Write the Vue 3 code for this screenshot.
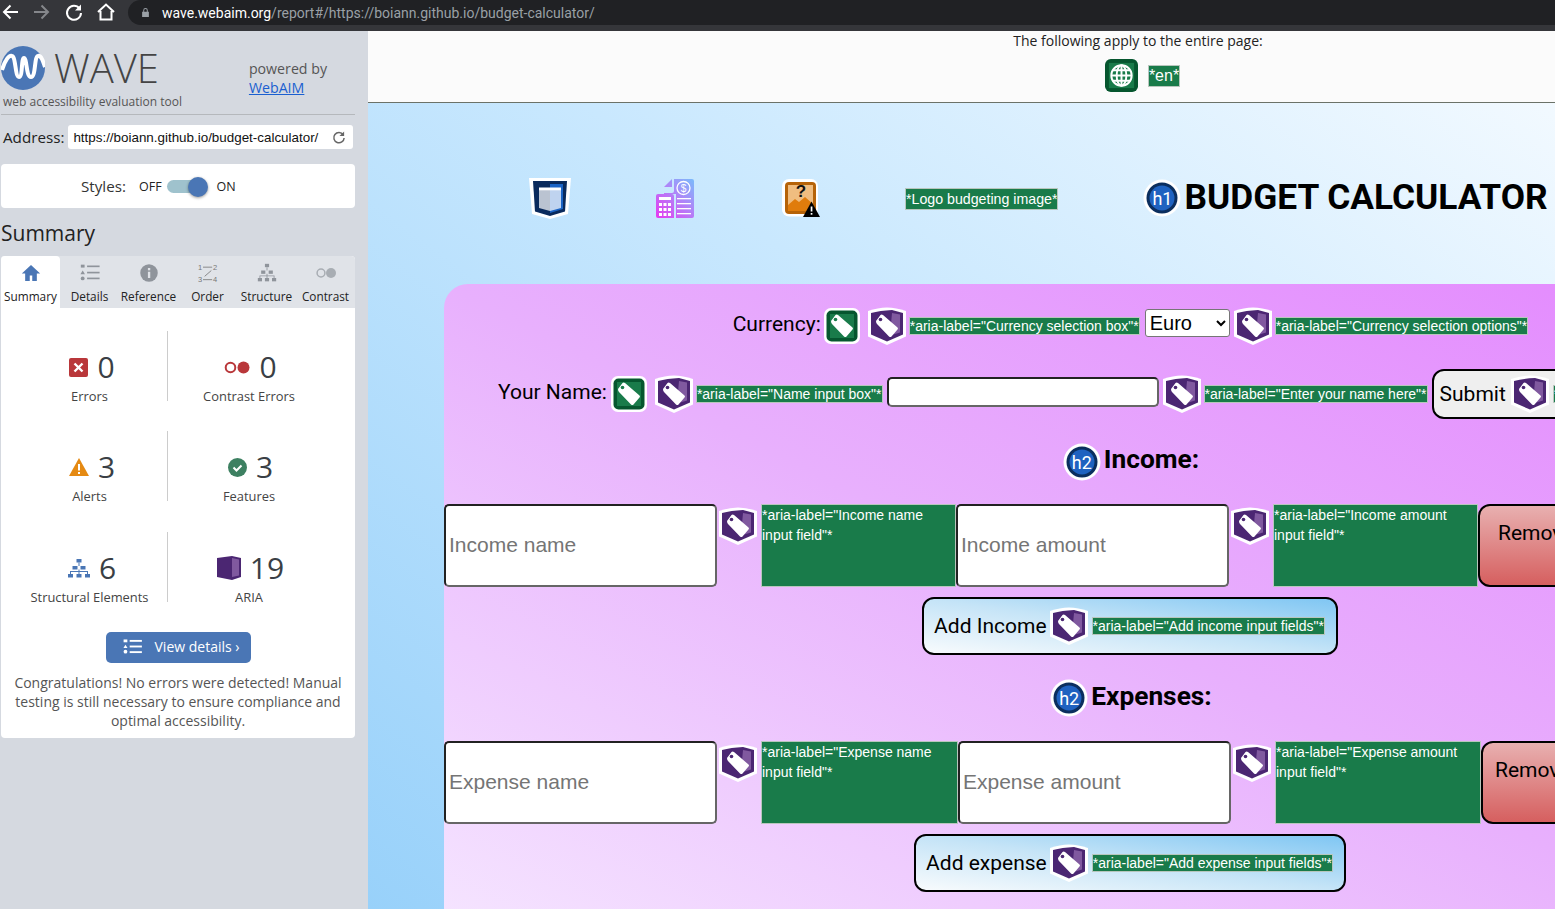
<template>
  <svg class="defs" aria-hidden="true">
    <symbol id="aria" viewBox="0 0 38 38">
      <path d="M0 4 Q10 .5 19 .5 Q28 .5 38 4 V29.500 L19 38 L0 29.500z" fill="#fff"/>
      <path d="M3 6 Q12 3.500 24 3 L35 6 V27.500 L19 34.500 L3 27.500z" fill="#4b2672"/>
      <path d="M24 6 L32 7.500 V25.500 L22 28.500z" fill="#80599f"/>
      <path d="M8 14 L12.500 8 Q13.500 7 15 8 L29.500 20.500 Q30.500 21.500 29.500 22.500 L23.500 29.500 Q22.500 30.500 21 29.500 L9 17 Q8 16 8 14z" fill="#fff"/>
      <circle cx="12.500" cy="12.500" r="1.800" fill="#4b2672"/>
    </symbol>
    <symbol id="feature-tag" viewBox="0 0 38 38">
      <rect x="1" y="1" width="36" height="36" rx="7" fill="#fff"/>
      <rect x="3.500" y="3.500" width="31" height="31" rx="5" fill="#06562f"/>
      <rect x="7" y="7" width="24" height="24" fill="#197b4a"/>
      <path d="M8 14 L12.500 8 Q13.500 7 15 8 L29.500 20.500 Q30.500 21.500 29.500 22.500 L23.500 29.500 Q22.500 30.500 21 29.500 L9 17 Q8 16 8 14z" fill="#fff"/>
      <circle cx="12.500" cy="12.500" r="1.800" fill="#197b4a"/>
    </symbol>
    <symbol id="heading" viewBox="0 0 38 38">
      <circle cx="19" cy="19" r="18.500" fill="#fff"/>
      <circle cx="19" cy="19" r="15.500" fill="#0b2e5e"/>
      <circle cx="19" cy="19" r="12.500" fill="#1f62c0"/>
    </symbol>
  </svg>

  <div class="browser-bar">
    <svg class="nav-icon" viewBox="0 0 20 20"><path d="M18 10H5M10.500 3.500 4 10l6.500 6.500" fill="none" stroke="#fff" stroke-width="2"/></svg>
    <svg class="nav-icon" viewBox="0 0 20 20"><path d="M2 10h13M9.500 3.500 16 10l-6.500 6.500" fill="none" stroke="#85878b" stroke-width="2"/></svg>
    <svg class="nav-icon" viewBox="0 0 20 20"><path d="M15.500 6.500A7 7 0 1 0 17 11" fill="none" stroke="#fff" stroke-width="2"/><path d="M17 2.500v6h-6z" fill="#fff"/></svg>
    <svg class="nav-icon" viewBox="0 0 20 20"><path d="M2 10l8-7.500 8 7.500M4.500 9v8.500h11V9" fill="none" stroke="#fff" stroke-width="2"/></svg>
    <div class="url-pill">
      <svg class="lock" viewBox="0 0 12 14"><path d="M3 6V4a3 3 0 0 1 6 0v2h1.500v7h-9V6zm1.300 0h3.400V4a1.700 1.700 0 0 0-3.400 0z" fill="#9aa0a6"/></svg>
      <span class="url-host">wave.webaim.org</span><span class="url-rest">/report#/https://boiann.github.io/budget-calculator/</span>
    </div>
  </div>

  <div class="page">
    <aside class="sidebar">
      <header class="brand">
        <div class="brand-left">
          <div class="logo-row">
            <svg class="logo" viewBox="0 0 44 44">
              <circle cx="22" cy="22" r="22" fill="#4a76b5"/>
              <path d="M1 24C4 14 8 9 11 10C15 11 14 31 18 31C22 31 20 12 23 12C26 12 25 31 30 31C35 31 33 11 37 10C40 9 42 15 44 21" fill="none" stroke="#fff" stroke-width="4"/>
            </svg>
            <span class="wave">WAVE</span>
          </div>
          <div class="tagline">web accessibility evaluation tool</div>
        </div>
        <div class="powered">powered by<br /><a href="#">WebAIM</a></div>
      </header>

      <div class="address">
        <label>Address:</label>
        <div class="address-box">
          <span>https://boiann.github.io/budget-calculator/</span>
          <svg viewBox="0 0 16 16"><path d="M13 5a5.500 5.500 0 1 0 1 3.500" fill="none" stroke="#666" stroke-width="1.600"/><path d="M14 1.500v5h-5z" fill="#666"/></svg>
        </div>
      </div>

      <div class="styles-card">
        <span class="styles-label">Styles:</span>
        <span class="toggle-text">OFF</span>
        <span class="toggle"><i></i></span>
        <span class="toggle-text">ON</span>
      </div>

      <h2 class="summary-title">Summary</h2>

      <div class="panel">
        <nav class="tabs">
          <div v-for="tab in tabs" :key="tab.name" class="tab" :class="{ active: tab.active }">
            <svg viewBox="0 0 24 24" v-html="tab.icon"></svg>
            <span>{{ tab.name }}</span>
          </div>
        </nav>

        <div class="stats">
          <div v-for="stat in stats" :key="stat.label" class="stat">
            <div class="stat-top">
              <svg :style="{ width: stat.w + 'px' }" :viewBox="stat.box" v-html="stat.icon"></svg>
              <span class="stat-num">{{ stat.count }}</span>
            </div>
            <div class="stat-label">{{ stat.label }}</div>
          </div>
        </div>

        <button class="view-details">
          <svg viewBox="0 0 20 16"><g fill="#fff"><rect x="0.500" y="0.500" width="4" height="3"/><path d="M2.500 6l2.200 3.500H.3z"/><circle cx="2.500" cy="13.500" r="2"/><rect x="7" y="1" width="13" height="2"/><rect x="7" y="7" width="13" height="2"/><rect x="7" y="13" width="13" height="2"/></g></svg>
          View details ›
        </button>
        <p class="congrats">
          Congratulations! No errors were detected! Manual testing is still necessary to ensure compliance and optimal accessibility.
        </p>
      </div>
    </aside>

    <main class="report">
      <div class="page-notes">
        <div>The following apply to the entire page:</div>
        <div class="page-notes-row">
          <svg class="globe" viewBox="0 0 34 34">
            <rect width="34" height="34" rx="6" fill="#06562f"/>
            <rect x="4" y="4" width="26" height="26" fill="#197b4a"/>
            <g fill="none" stroke="#fff" stroke-width="2"><circle cx="17" cy="17" r="10.500"/><ellipse cx="17" cy="17" rx="5" ry="10.500"/><path d="M17 6.500v21M6.500 17h21M8 11.500h18M8 22.500h18"/></g>
          </svg>
          <span class="note en-note">*en*</span>
        </div>
      </div>

      <div class="site">
        <div class="site-head">
          <svg class="ic-structure" viewBox="0 0 42 41">
            <path d="M0 0H42L39 36 21 41 3 36z" fill="#fff"/>
            <path d="M4 3H38L36 33.500 21 38 6 33.500z" fill="#0a2a5c"/>
            <path d="M21 6H34V31L21 35z" fill="#1b63c4"/>
            <path d="M10 12H32V30L21 33 10 30z" fill="#fff" fill-opacity=".72"/>
            <rect x="10" y="9.500" width="22" height="2.800" fill="#fff"/>
          </svg>
          <svg class="ic-logo" viewBox="0 0 38 40">
            <defs><linearGradient id="logo-grad" gradientUnits="userSpaceOnUse" x1="0" y1="40" x2="38" y2="0"><stop offset="0" stop-color="#e63af0"/><stop offset=".55" stop-color="#b084f8"/><stop offset="1" stop-color="#78bdfb"/></linearGradient></defs>
            <path d="M8 16V9l8-8v8H8zM18 1h18a2 2 0 0 1 2 2v35a2 2 0 0 1-2 2H20V16H8v-1h8a2 2 0 0 0 2-2z" fill="url(#logo-grad)"/>
            <path d="M0 18a2 2 0 0 1 2-2h14a2 2 0 0 1 2 2v22H2a2 2 0 0 1-2-2z" fill="url(#logo-grad)"/>
            <g fill="#fff"><rect x="3" y="19" width="12" height="3"/><rect x="3" y="25" width="3" height="3"/><rect x="7.500" y="25" width="3" height="3"/><rect x="12" y="25" width="3" height="3"/><rect x="3" y="30" width="3" height="3"/><rect x="7.500" y="30" width="3" height="3"/><rect x="12" y="30" width="3" height="3"/><rect x="3" y="35" width="3" height="3"/><rect x="7.500" y="35" width="3" height="3"/><rect x="12" y="35" width="3" height="3"/><rect x="21" y="20" width="14" height="1.300"/><rect x="21" y="25" width="14" height="1.300"/><rect x="21" y="30" width="14" height="1.300"/><rect x="21" y="35" width="14" height="1.300"/></g>
            <circle cx="27.500" cy="10" r="6.500" fill="none" stroke="#fff" stroke-width="1.300"/>
            <text x="27.500" y="13.500" font-size="10" text-anchor="middle" fill="#fff" font-family="Liberation Sans">$</text>
          </svg>
          <svg class="ic-alt" viewBox="0 0 38 38">
            <rect x="0" y="0" width="36" height="37.500" rx="7" fill="#fff"/>
            <rect x="3" y="3" width="31" height="32" rx="4" fill="#b66308"/>
            <rect x="6" y="6" width="25" height="26" fill="#f0bd80"/>
            <path d="M6 26l7-6 4 3 6-5 8 7v7H6z" fill="#e07c0c"/>
            <text x="19" y="18" font-size="17" font-weight="700" text-anchor="middle" fill="#111" font-family="Liberation Sans">?</text>
            <path d="M29.500 22.500 38 38H21z" fill="#000"/>
            <rect x="28.700" y="27.500" width="1.700" height="5" fill="#fff"/><rect x="28.700" y="34" width="1.700" height="1.700" fill="#fff"/>
          </svg>
          <span class="note logo-note">*Logo budgeting image*</span>
          <div class="h1-wrap">
            <span class="badge"><svg><use href="#heading" /></svg><b>h1</b></span>
            <h1>BUDGET CALCULATOR</h1>
          </div>
        </div>

        <section class="card">
          <div class="line currency-line">
            <label>Currency:</label>
            <svg class="ico feat"><use href="#feature-tag" /></svg>
            <svg class="ico"><use href="#aria" /></svg>
            <span class="note">*aria-label="Currency selection box"*</span>
            <select class="currency"><option>Euro</option></select>
            <svg class="ico"><use href="#aria" /></svg>
            <span class="note">*aria-label="Currency selection options"*</span>
          </div>

          <div class="line name-line">
            <label>Your Name:</label>
            <svg class="ico feat"><use href="#feature-tag" /></svg>
            <svg class="ico"><use href="#aria" /></svg>
            <span class="note">*aria-label="Name input box"*</span>
            <input class="name-input" type="text" />
            <svg class="ico"><use href="#aria" /></svg>
            <span class="note">*aria-label="Enter your name here"*</span>
            <button class="submit">Submit<svg class="ico"><use href="#aria" /></svg><span class="note">*aria-label="Submit your name"*</span></button>
          </div>

          <div class="section-title income-title">
            <span class="badge"><svg><use href="#heading" /></svg><b>h2</b></span>
            <h2>Income:</h2>
          </div>

          <div class="entry-row income-row">
            <input class="entry" type="text" placeholder="Income name" />
            <svg class="ico"><use href="#aria" /></svg>
            <span class="block-note w-a">*aria-label="Income name input field"*</span>
            <input class="entry" type="text" placeholder="Income amount" />
            <svg class="ico"><use href="#aria" /></svg>
            <span class="block-note w-b">*aria-label="Income amount input field"*</span>
            <button class="remove remove-income">Remove</button>
          </div>

          <div class="add-line">
            <button class="add">Add Income<svg class="ico"><use href="#aria" /></svg><span class="note">*aria-label="Add income input fields"*</span></button>
          </div>

          <div class="section-title expense-title">
            <span class="badge"><svg><use href="#heading" /></svg><b>h2</b></span>
            <h2>Expenses:</h2>
          </div>

          <div class="entry-row expense-row">
            <input class="entry" type="text" placeholder="Expense name" />
            <svg class="ico"><use href="#aria" /></svg>
            <span class="block-note w-c">*aria-label="Expense name input field"*</span>
            <input class="entry" type="text" placeholder="Expense amount" />
            <svg class="ico"><use href="#aria" /></svg>
            <span class="block-note w-d">*aria-label="Expense amount input field"*</span>
            <button class="remove">Remove</button>
          </div>

          <div class="add-line">
            <button class="add">Add expense<svg class="ico"><use href="#aria" /></svg><span class="note">*aria-label="Add expense input fields"*</span></button>
          </div>
        </section>
      </div>
    </main>
  </div>
</template>

<script setup>
const gray = "#8f949b";
const tabs = [
  {
    name: "Summary",
    active: true,
    icon: '<path d="M12 2.500 1 12.500H5V21.500h5.500v-6.500h3v6.500H19v-9h4z" fill="#4a76b5"/>',
  },
  {
    name: "Details",
    icon: `<g fill="${gray}"><rect x="1" y="2" width="4.500" height="3.500"/><path d="M3.200 9l2.800 4.500H.5z"/><circle cx="3.200" cy="18.500" r="2.300"/><rect x="8.500" y="3" width="15" height="2"/><rect x="8.500" y="10.500" width="15" height="2"/><rect x="8.500" y="17.500" width="15" height="2"/></g>`,
  },
  {
    name: "Reference",
    icon: `<circle cx="12" cy="12" r="10.500" fill="${gray}"/><rect x="10.700" y="10.500" width="2.800" height="7.500" fill="#e0e3e8"/><rect x="10.700" y="6" width="2.800" height="2.800" fill="#e0e3e8"/>`,
  },
  {
    name: "Order",
    icon: `<g fill="#777" font-size="9" font-family="Liberation Sans"><text x="0" y="8">1</text><text x="18" y="8">2</text><text x="0" y="23">3</text><text x="18" y="23">4</text></g><path d="M6 5h11M6 20h11M16 9l-8 7" stroke="#777" fill="none"/>`,
  },
  {
    name: "Structure",
    icon: `<g fill="${gray}"><rect x="9.500" y="1" width="5" height="4"/><rect x="5" y="9" width="5" height="4"/><rect x="14" y="9" width="5" height="4"/><rect x="1" y="18" width="5" height="4"/><rect x="9.500" y="18" width="5" height="4"/><rect x="18" y="18" width="5" height="4"/><path d="M11.500 5h1v4h-1zM3 15h18v3h-1v-2H4v2H3zM11.500 13h1v5h-1z"/></g>`,
  },
  {
    name: "Contrast",
    icon: `<circle cx="6" cy="12" r="4.700" fill="none" stroke="#a8adb3" stroke-width="1.800"/><circle cx="18" cy="12" r="6" fill="#a8adb3"/>`,
  },
];

const stats = [
  {
    label: "Errors",
    count: 0,
    w: 19,
    box: "0 0 19 19",
    icon: '<rect width="19" height="19" rx="2" fill="#b9373a"/><path d="M5.500 5.500l8 8M13.500 5.500l-8 8" stroke="#fff" stroke-width="2.400"/>',
  },
  {
    label: "Contrast Errors",
    count: 0,
    w: 26,
    box: "0 0 26 13",
    icon: '<circle cx="6.500" cy="6.500" r="4.800" fill="none" stroke="#b9373a" stroke-width="2"/><circle cx="19.500" cy="6.500" r="6" fill="#b9373a"/>',
  },
  {
    label: "Alerts",
    count: 3,
    w: 20,
    box: "0 0 20 18",
    icon: '<path d="M10 0l10 18H0z" fill="#e58a13"/><rect x="9" y="6" width="2" height="6.500" fill="#fff"/><rect x="9" y="14" width="2" height="2" fill="#fff"/>',
  },
  {
    label: "Features",
    count: 3,
    w: 19,
    box: "0 0 19 19",
    icon: '<circle cx="9.500" cy="9.500" r="9.500" fill="#3d8061"/><path d="M5.500 9.500l3 3 5-5" fill="none" stroke="#fff" stroke-width="2"/>',
  },
  {
    label: "Structural Elements",
    count: 6,
    w: 22,
    box: "0 0 22 19",
    icon: '<g fill="#4a76b5"><rect x="8.500" y="0" width="5" height="3.500"/><rect x="4.500" y="7" width="5" height="3.500"/><rect x="12.500" y="7" width="5" height="3.500"/><rect x="0" y="15" width="5" height="3.500"/><rect x="8.500" y="15" width="5" height="3.500"/><rect x="17" y="15" width="5" height="3.500"/><path d="M10.500 3.500h1V7h-1zM2 12h18v3h-1v-2H3v2H2zM10.500 10.500h1V15h-1z"/></g>',
  },
  {
    label: "ARIA",
    count: 19,
    w: 24,
    box: "0 0 24 24",
    icon: '<path d="M0 2 15 0l9 2v19l-9 3-15-3z" fill="#4b2672"/><path d="M15 2l7 1.500v16L15 21z" fill="#80599f"/>',
  },
];
</script>

<style>
html,
body {
  margin: 0;
  height: 100%;
  overflow: hidden;
}
</style>

<style scoped>
.defs {
  position: absolute;
  width: 0;
  height: 0;
}

.browser-bar {
  height: 31px;
  box-sizing: border-box;
  background: #35363a;
  display: flex;
  align-items: flex-start;
  font-family: "Roboto", sans-serif;
}

.nav-icon {
  width: 20px;
  height: 20px;
  margin-top: 2px;
  padding-right: 12px;
  flex: none;
}

.url-pill {
  flex: 1;
  height: 25px;
  background: #202124;
  border-radius: 13px 0 0 13px;
  display: flex;
  align-items: center;
  padding-left: 13px;
  font-size: 14px;
}

.lock {
  width: 9px;
  height: 11px;
  margin-right: 12px;
}

.url-host {
  color: #fff;
}

.url-rest {
  color: #9aa0a6;
}

.page {
  display: flex;
  height: 878px;
  overflow: hidden;
}

.sidebar {
  width: 368px;
  flex: none;
  box-sizing: border-box;
  background: #d5d9e0;
  padding: 15px 13px 0 1px;
  font-family: "Open Sans", sans-serif;
  color: #333;
}

.brand {
  display: flex;
  justify-content: space-between;
  border-bottom: 1px solid #b5b8bc;
  height: 68px;
}

.logo-row {
  display: flex;
  align-items: center;
  height: 44px;
}

.logo {
  width: 44px;
  height: 44px;
}

.wave {
  font-size: 40px;
  font-weight: 300;
  color: #444;
  margin-left: 9px;
  line-height: 44px;
}

.tagline {
  font-size: 12px;
  color: #555;
  margin: 4px 0 0 2px;
  line-height: 16px;
}

.powered {
  font-size: 14.200px;
  line-height: 19px;
  color: #555;
  margin: 13px 28px 0 0;
}

.powered a {
  color: #1a5fd0;
}

.address {
  display: flex;
  align-items: center;
  margin-top: 10px;
  padding-left: 2px;
}

.address label {
  font-size: 15.200px;
  color: #222;
  margin-right: 4px;
}

.address-box {
  width: 285px;
  height: 24px;
  box-sizing: border-box;
  background: #fff;
  border-radius: 3px;
  display: flex;
  align-items: center;
  justify-content: space-between;
  padding: 0 7px 0 5px;
  font-family: "Liberation Sans", sans-serif;
  font-size: 13.400px;
  color: #111;
}

.address-box svg {
  width: 15px;
  height: 15px;
}

.styles-card {
  height: 44px;
  margin-top: 15px;
  background: #fff;
  border-radius: 4px;
  display: flex;
  align-items: center;
  padding-left: 80px;
}

.styles-label {
  font-size: 15.200px;
  margin-right: 13px;
}

.toggle-text {
  font-size: 12.500px;
  color: #222;
}

.toggle {
  position: relative;
  width: 34px;
  height: 13px;
  margin: 0 16px 0 5px;
  background: #9fc2cd;
  border-radius: 7px;
}

.toggle i {
  position: absolute;
  right: -7px;
  top: -3px;
  width: 20px;
  height: 20px;
  border-radius: 50%;
  background: #4a76b5;
  box-shadow: 0 1px 3px rgba(0, 0, 0, 0.4);
}

.summary-title {
  margin: 10px 0 0;
  font-size: 21px;
  font-weight: 400;
  line-height: 30px;
  color: #222;
}

.panel {
  margin-top: 8px;
  height: 482px;
  background: #fff;
  border-radius: 4px;
  text-align: center;
}

.tabs {
  display: flex;
  height: 52px;
  background: #e0e3e8;
  border-radius: 4px 4px 0 0;
}

.tab {
  width: 59px;
  display: flex;
  flex-direction: column;
  align-items: center;
  font-size: 11.800px;
  color: #222;
  white-space: nowrap;
  padding-top: 7px;
  box-sizing: border-box;
}

.tab.active {
  background: #fff;
  border-radius: 4px 4px 0 0;
}

.tab svg {
  width: 20px;
  height: 20px;
  margin-bottom: 5px;
}

.stats {
  display: grid;
  grid-template-columns: 167px 1fr;
  grid-template-rows: 70px 71px 70px;
  row-gap: 30px;
  align-items: start;
  margin-top: 23px;
  margin-bottom: 30px;
}

.stat {
  display: flex;
  flex-direction: column;
  align-items: center;
  height: 70px;
  padding-top: 22px;
  box-sizing: border-box;
}

.stat:nth-child(odd) {
  border-right: 1px solid #ccc;
  padding-left: 11px;
}

.stat:nth-child(even) {
  padding-right: 25px;
}

.stat:nth-child(odd) .stat-top {
  margin-left: 5px;
}

.stat:nth-child(even) .stat-top {
  margin-left: 3px;
}

.stat-top {
  display: flex;
  align-items: center;
  gap: 9px;
  height: 28px;
}

.stat-num {
  font-size: 30px;
  line-height: 28px;
  color: #3a3f45;
}

.stat-label {
  margin-top: 7px;
  font-size: 12.900px;
  line-height: 17px;
  color: #444;
}

.view-details {
  width: 145px;
  height: 31px;
  box-sizing: border-box;
  background: #4a76b5;
  border: 0;
  border-radius: 5px;
  color: #fff;
  font-family: "Open Sans", sans-serif;
  font-size: 14px;
  display: inline-flex;
  align-items: center;
  padding: 0 0 2px 17px;
  gap: 13px;
  white-space: nowrap;
}

.view-details svg {
  width: 19px;
  height: 15px;
}

.congrats {
  margin: 10px 6px 0;
  font-size: 14px;
  line-height: 19px;
  color: #555;
}

.report {
  flex: 1;
  min-width: 0;
  overflow: hidden;
  background: linear-gradient(to top right, #98d1fa 0%, #c9e8fe 55%, #f6fbff 100%);
}

.page-notes {
  height: 72px;
  box-sizing: border-box;
  background: #fbfbfb;
  border-bottom: 1px solid #6b7268;
  text-align: center;
  font-family: "Open Sans", sans-serif;
  font-size: 14px;
  color: #222;
  padding-left: 353px;
}

.page-notes-row {
  display: flex;
  justify-content: center;
  align-items: center;
  gap: 11px;
  margin-top: 9px;
  padding-left: 8px;
}

.globe {
  width: 33px;
  height: 33px;
}

.note {
  background: #197b4a;
  color: #fff;
  font-family: "Liberation Sans", sans-serif;
  font-size: 14px;
  line-height: 16px;
  outline: 1px solid #b8c6bd;
  white-space: nowrap;
  flex: none;
}

.en-note {
  font-size: 16px;
  line-height: 20px;
}

.site {
  width: 1448px;
  padding-top: 75px;
  font-family: "Roboto", sans-serif;
}

.site-head {
  display: flex;
  align-items: center;
  height: 40px;
  padding-left: 161px;
  margin-bottom: 66px;
}

.ic-structure {
  width: 42px;
  height: 41px;
}

.ic-logo {
  width: 38px;
  height: 40px;
  margin-left: 85px;
}

.ic-alt {
  width: 38px;
  height: 38px;
  margin-left: 88px;
}

.logo-note {
  margin: 2px 0 0 86px;
  padding: 2px 0;
  font-size: 14.200px;
}

.h1-wrap {
  display: flex;
  align-items: center;
  margin-left: 86px;
  gap: 3px;
}

.badge {
  position: relative;
  width: 38px;
  height: 38px;
  flex: none;
}

.badge svg {
  width: 38px;
  height: 38px;
  display: block;
}

.badge b {
  position: absolute;
  inset: 0;
  display: flex;
  align-items: center;
  justify-content: center;
  color: #fff;
  font-weight: 400;
  font-size: 18px;
}

h1 {
  margin: -3px 0 0;
  font-size: 35.300px;
  font-weight: 700;
  color: #000;
  white-space: nowrap;
}

.card {
  margin-left: 76px;
  width: 1372px;
  height: 700px;
  border-radius: 24px 0 0 0;
  background: linear-gradient(to top right, #f6e9ff 0%, #e8b0fd 50%, #e385fe 100%);
  color: #000;
}

.line {
  display: flex;
  justify-content: center;
  align-items: center;
  gap: 5px;
}

.line label {
  font-size: 21px;
  margin: -4px -2px 0 0;
}

.feat {
  margin-right: 2px;
}

.currency-line {
  padding-top: 23px;
  height: 38px;
}

.currency-line label {
  margin-right: -3px;
}

.currency-line .note,
.name-line > .note {
  margin-left: -1px;
}

.name-line {
  margin-top: 27px;
  height: 44px;
}

.ico {
  width: 38px;
  height: 38px;
  flex: none;
}

.currency {
  width: 85px;
  height: 28px;
  font-family: "Liberation Sans", sans-serif;
  font-size: 20px;
  background: #fff;
  border: 1px solid #767676;
  border-radius: 3px;
  margin: -6px -1px 0 1px;
}

.name-input {
  width: 272px;
  height: 30px;
  box-sizing: border-box;
  background: #fff;
  border: 2px solid;
  border-color: #222 #666 #666 #222;
  border-radius: 5px;
  margin: -4px -1px 0 0;
}

.submit {
  display: flex;
  align-items: center;
  gap: 5px;
  height: 50px;
  padding: 0 6px;
  background: #efefef;
  border: 2px solid #000;
  border-radius: 12px;
  font-family: "Roboto", sans-serif;
  font-size: 21px;
  color: #000;
  flex: none;
}

.section-title {
  display: flex;
  justify-content: center;
  align-items: center;
  gap: 3px;
  padding-left: 2px;
}

.section-title h2 {
  margin: -5px 0 0;
  font-size: 26.300px;
  font-weight: 700;
}

.income-title h2 {
  margin-top: -7px;
}

.income-title {
  margin-top: 27px;
  height: 38px;
}

.entry-row {
  display: flex;
  align-items: flex-start;
  white-space: nowrap;
}

.income-row {
  margin-top: 23px;
}

.expense-row {
  margin-top: 24px;
}

.entry {
  width: 273px;
  height: 83px;
  box-sizing: border-box;
  flex: none;
  background: #fff;
  border: 2px solid;
  border-color: #222 #666 #666 #222;
  border-radius: 5px;
  padding: 0 3px 2px;
  font-family: "Liberation Sans", sans-serif;
  font-size: 21px;
}

.entry::placeholder {
  color: #757575;
}

.entry-row .ico {
  margin: 3px 4px 0 2px;
}

.block-note {
  height: 83px;
  box-sizing: border-box;
  flex: none;
  white-space: normal;
  background: #197b4a;
  color: #fff;
  font-family: "Liberation Sans", sans-serif;
  font-size: 14px;
  line-height: 20px;
  padding: 1px;
  outline: 1px solid #b8c6bd;
  outline-offset: -1px;
}

.w-a {
  width: 195px;
}

.w-b {
  width: 205px;
}

.w-c {
  width: 197px;
}

.w-d {
  width: 206px;
}

.remove {
  width: 110px;
  height: 83px;
  flex: none;
  box-sizing: border-box;
  background: linear-gradient(#e8b0b0, #d65f5f);
  border: 2px solid #000;
  border-radius: 12px;
  font-family: "Roboto", sans-serif;
  font-size: 21px;
  text-align: left;
  padding: 0 0 26px 12px;
  color: #000;
}

.remove-income {
  padding-left: 18px;
}

.add-line {
  display: flex;
  justify-content: center;
}

.add {
  display: flex;
  align-items: center;
  gap: 4px;
  height: 58px;
  margin-top: 10px;
  padding: 0 12px 0 10px;
  background: linear-gradient(to top right, #f8fbfd 0%, #c5e4f7 50%, #7fc6f3 100%);
  border: 2px solid #000;
  border-radius: 12px;
  font-family: "Roboto", sans-serif;
  font-size: 21px;
  color: #000;
  flex: none;
}

.add .ico {
  margin-left: -1px;
}

.add .note {
  margin-left: 1px;
}

.expense-title {
  margin-top: 24px;
  height: 38px;
}
</style>
